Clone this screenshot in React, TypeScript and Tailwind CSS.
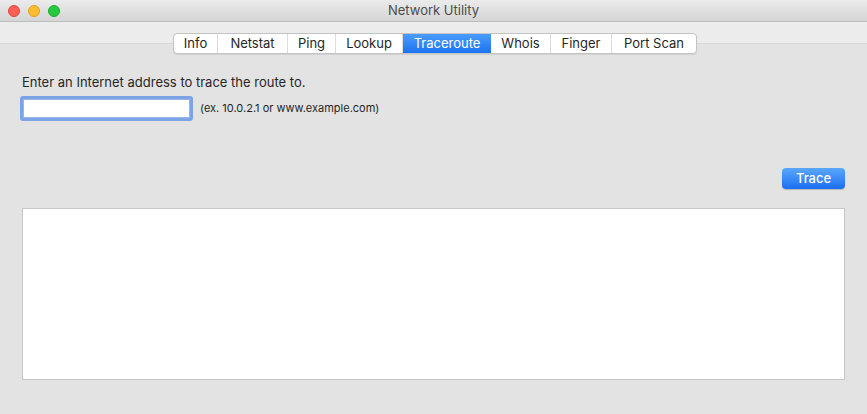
const tabs = ["Info", "Netstat", "Ping", "Lookup", "Traceroute", "Whois", "Finger", "Port Scan"];
const tabWidths = [44, 70, 48, 67, 88, 60, 61, 84];

export default function App() {
  return (
    <div
      className="w-[867px] h-[414px] bg-[#e3e3e3] flex flex-col overflow-hidden text-[#262626]"
      style={{ fontFamily: 'Inter, "Liberation Sans", Arial, sans-serif' }}
    >
      {/* Title bar */}
      <div className="h-[22px] shrink-0 relative flex items-center justify-center bg-gradient-to-b from-[#ebebeb] to-[#d5d5d5] border-b border-[#bdbdbd]">
        <div className="absolute left-[8px] top-[5px] flex gap-[8px]">
          <span className="w-[12px] h-[12px] rounded-full bg-[#fd5f57] border border-[#e0443e]" />
          <span className="w-[12px] h-[12px] rounded-full bg-[#febc2e] border border-[#dea123]" />
          <span className="w-[12px] h-[12px] rounded-full bg-[#28c840] border border-[#1aab29]" />
        </div>
        <span className="text-[13px] text-[#4c4c4c]">Network Utility</span>
      </div>

      {/* Tab strip */}
      <div className="h-[22px] shrink-0 bg-[#ececec] border-b border-[#d9d9d9] relative">
        <div className="absolute left-[173px] top-[11px] flex h-[21px] rounded-[4px] bg-white border border-[#c3c3c3] shadow-[0_1px_1px_rgba(0,0,0,0.08)] overflow-hidden">
          {tabs.map((t, i) => (
            <div
              key={t}
              style={{ width: tabWidths[i] }}
              className={
                t === "Traceroute"
                  ? "flex items-center justify-center text-[13px] text-white bg-gradient-to-b from-[#4a9cfb] to-[#1a73f0]"
                  : "flex items-center justify-center text-[13px] text-[#262626] border-r border-[#dcdcdc] last:border-r-0"
              }
            >
              {t}
            </div>
          ))}
        </div>
      </div>

      {/* Content */}
      <div className="flex-1 flex flex-col px-[22px] pt-[30px]">
        <div className="text-[13px] leading-[16px]">Enter an Internet address to trace the route to.</div>
        <div className="flex items-center mt-[6px] ml-[-2px]">
          <div className="w-[173px] h-[25px] rounded-[3px] bg-[#7ba3e6] p-[3px]">
            <div className="w-full h-full bg-white border border-[#9ab6e6]" />
          </div>
          <span className="ml-[7px] text-[11px] text-[#262626]">(ex. 10.0.2.1 or www.example.com)</span>
        </div>

        <div className="flex justify-end mt-[47px]">
          <button className="w-[63px] h-[21px] rounded-[4px] bg-gradient-to-b from-[#5aa7fc] to-[#1a6ef0] text-white text-[13px] font-medium shadow-[0_1px_1px_rgba(0,0,0,0.2)]">
            Trace
          </button>
        </div>

        <div className="mt-[19px] h-[172px] bg-white border border-[#c6c6c6]" />
      </div>
    </div>
  );
}
